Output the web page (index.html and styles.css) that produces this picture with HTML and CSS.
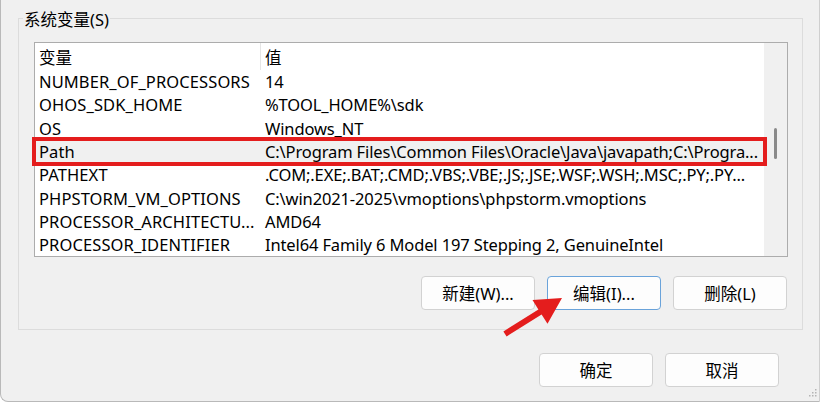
FILE: index.html
```html
<!DOCTYPE html>
<html lang="zh-CN">
<head>
<meta charset="utf-8">
<title>系统变量</title>
<link rel="stylesheet" href="styles.css">
</head>
<body>
<div class="window">
  <div class="group">
    <div class="group-label">系统变量(S)</div>
    <div class="list">
      <div class="table">
        <div class="row head"><div class="c1">变量</div><div class="c2">值</div></div>
        <div class="row"><div class="c1">NUMBER_OF_PROCESSORS</div><div class="c2">14</div></div>
        <div class="row"><div class="c1">OHOS_SDK_HOME</div><div class="c2">%TOOL_HOME%\sdk</div></div>
        <div class="row"><div class="c1">OS</div><div class="c2">Windows_NT</div></div>
        <div class="row sel"><div class="c1">Path</div><div class="c2">C:\Program Files\Common Files\Oracle\Java\javapath;C:\Progra...</div><div class="mark"></div></div>
        <div class="row"><div class="c1">PATHEXT</div><div class="c2">.COM;.EXE;.BAT;.CMD;.VBS;.VBE;.JS;.JSE;.WSF;.WSH;.MSC;.PY;.PY...</div></div>
        <div class="row"><div class="c1">PHPSTORM_VM_OPTIONS</div><div class="c2">C:\win2021-2025\vmoptions\phpstorm.vmoptions</div></div>
        <div class="row"><div class="c1">PROCESSOR_ARCHITECTU...</div><div class="c2">AMD64</div></div>
        <div class="row"><div class="c1">PROCESSOR_IDENTIFIER</div><div class="c2">Intel64 Family 6 Model 197 Stepping 2, GenuineIntel</div></div>
      </div>
      <div class="scrollbar"><div class="thumb"></div></div>
    </div>
    <div class="btn-row">
      <button class="btn">新建(W)...</button>
      <button class="btn focus">编辑(I)...</button>
      <button class="btn">删除(L)</button>
    </div>
  </div>
  <div class="dialog-buttons">
    <button class="btn">确定</button>
    <button class="btn">取消</button>
  </div>
  <svg class="arrow" viewBox="495 290 75 55" width="75" height="55">
    <polygon fill="#e41d1d" points="503.4,331.5 538.4,309.4 532.5,300.1 562,298 547.5,323.7 541.6,314.4 506.6,336.5"/>
  </svg>
  <svg class="grip" viewBox="0 0 10 10" width="10" height="10">
    <g fill="#b4b4b4">
      <rect x="8" y="0" width="1.5" height="1.5"/>
      <rect x="5" y="3" width="1.5" height="1.5"/>
      <rect x="8" y="3" width="1.5" height="1.5"/>
      <rect x="2" y="6" width="1.5" height="1.5"/>
      <rect x="5" y="6" width="1.5" height="1.5"/>
      <rect x="8" y="6" width="1.5" height="1.5"/>
    </g>
  </svg>
</div>
</body>
</html>
```
FILE: styles.css
```css
html, body {
  margin: 0;
  padding: 0;
  background: #ffffff;
}

body {
  font-family: "Noto Sans", "Noto Sans CJK SC", sans-serif;
  font-size: 16.5px;
  color: #000;
}

.window {
  position: relative;
  box-sizing: border-box;
  width: 820px;
  height: 402px;
  background: #f0f0f0;
  border-left: 1px solid #b9b9b9;
  border-right: 1px solid #cfcfcf;
  border-bottom: 1px solid #b9b9b9;
  border-bottom-left-radius: 8px;
  padding: 18px 0 0 17px;
  display: flex;
  flex-direction: column;
  overflow: hidden;
}

.group {
  box-sizing: border-box;
  width: 785px;
  height: 312px;
  border: 1px solid #dcdcdc;
  padding: 0 15px 0 15px;
  display: flex;
  flex-direction: column;
}

.group-label {
  align-self: flex-start;
  margin: -10px 0 0 -11px;
  padding: 0 1px;
  line-height: 22px;
  background: #f0f0f0;
  white-space: nowrap;
}

.list {
  box-sizing: border-box;
  flex: none;
  margin-top: 11px;
  width: 754px;
  height: 215px;
  border: 1px solid #acacac;
  background: #fff;
  display: flex;
}

.table {
  flex: 1;
  display: flex;
  flex-direction: column;
}

.row {
  position: relative;
  display: flex;
  height: 23.33px;
  line-height: 23.33px;
  white-space: nowrap;
}

.row.head {
  box-sizing: border-box;
  height: 27px;
  line-height: 24px;
  padding-top: 3px;
}

.c1 {
  box-sizing: border-box;
  width: 226px;
  flex: none;
  padding-left: 4px;
  letter-spacing: 0.1px;
  overflow: hidden;
}

.head .c1 {
  border-right: 1px solid #e5e5e5;
  margin-top: -3px;
  padding-top: 3px;
}

.c2 {
  flex: 1;
  padding-left: 4px;
  letter-spacing: -0.13px;
  overflow: hidden;
}

.row.sel {
  background: #f0f0f0;
}

.mark {
  position: absolute;
  left: -3px;
  right: -3px;
  top: -3px;
  bottom: -3px;
  border: 4px solid #e41d1d;
}

.scrollbar {
  width: 23px;
  flex: none;
  background: #f0f0f0;
}

.thumb {
  width: 3px;
  height: 31px;
  margin: 85px 0 0 10px;
  border-radius: 2px;
  background: #8a8a8a;
}

.btn-row {
  margin-top: 19px;
  display: flex;
  justify-content: flex-end;
  gap: 12px;
}

.btn {
  box-sizing: border-box;
  width: 114px;
  height: 34px;
  padding: 0;
  background: #fdfdfd;
  border: 1px solid #d2d2d2;
  border-radius: 4px;
  font-family: "Noto Sans", "Noto Sans CJK SC", sans-serif;
  font-size: 16.5px;
  color: #000;
}

.btn.focus {
  border-color: #6aa3da;
}

.dialog-buttons {
  margin: 23px 40px 0 0;
  display: flex;
  justify-content: flex-end;
  gap: 12px;
}

.arrow {
  position: absolute;
  left: 494px;
  top: 290px;
}

.grip {
  position: absolute;
  right: 2px;
  bottom: 2px;
}
```
